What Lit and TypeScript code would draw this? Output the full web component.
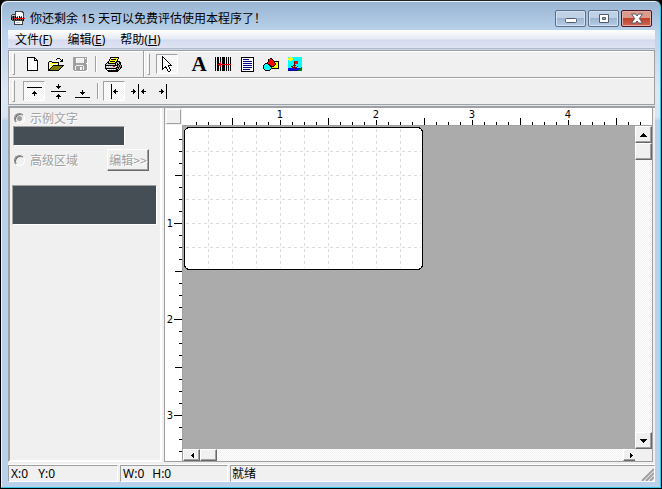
import { LitElement, html, svg, css } from "lit";
import { customElement } from "lit/decorators.js";

const palette: Record<string, string> = {
  k: "#000000", w: "#ffffff", y: "#ffff00", o: "#808000", g: "#a0a0a0", d: "#606060",
  r: "#ff0000", m: "#800000", c: "#00ffff", b: "#000080", u: "#0000ff", l: "#c8c8c8",
  n: "#008000", t: "#5a6b80", s: "#404040",
};

const bitmaps: Record<string, string[]> = {
  app: [
    "    ssssssss  ",
    "    swwwwwlss ",
    "    swwwwwwws ",
    " sssswwwwwwws ",
    "sllldwwwwwwws ",
    "sdkdkwdwkwdwd ",
    "kdkdkdkwkdkwk ",
    "kdkrrrrrrrrrrr",
    "kdkdkdkdkdkdk ",
    " sssssssssssk ",
    "   swwwwwwws  ",
    "   swllllwws  ",
    "   swwwwwwws  ",
    "   sssssssss  ",
  ],
  new: [
    "kkkkkkkk   ",
    "kwwwwwwkk  ",
    "kwwwwwwkwk ",
    "kwwwwwwkkkk",
    ...Array(9).fill("kwwwwwwwwwk"),
    "kkkkkkkkkkk",
  ],
  open: [
    "         kkk    ",
    "        k   k k ",
    "             kk ",
    " kkk        kkk ",
    "kywykkkkkkk     ",
    "kwywywywywk     ",
    "kywywywywyk     ",
    "kwywykkkkkkkkkkk",
    "kywykoooooooook ",
    "kwykoooooooook  ",
    "kykoooooooook   ",
    "kkoooooooook    ",
    "kkkkkkkkkkk     ",
  ],
  save: [
    "gggggggggggggg ",
    "gggw      wgwgw",
    "gggw      wgggw",
    "gggw      wgggw",
    "gggw      wgggw",
    "gggw      wgggw",
    "gggggggggggggww",
    "ggggggggggggggw",
    "ggg       ggggw",
    "gg ggggggg gggw",
    "gg ggggw g gggw",
    "gg ggggw g gggw",
    "gg ggggw g gggw",
    " ggggggggggggww",
    "  wwwwwwwwwwww ",
  ],
  print: [
    "     kkkkkkkkk   ",
    "     kwwyyyywk   ",
    "    kykkkkkyk    ",
    "    kyyyyyyyk    ",
    "   kykkkkkykkkk  ",
    "  kkyyyyyykkglkk ",
    " klkkkkkkkklklkk ",
    "klllllllllklkkgk ",
    "kkkkkkkkkkkkkgkgk",
    "klwlwlwlrrlwkgkgk",
    "kllllllllllkkkgkk",
    "kkkkkkkkkkkkgkgk ",
    " kwwlwlwlwlkkgk  ",
    "  kkkkkkkkkkkk   ",
    "   kkkkkkkkkk    ",
  ],
  pointer: [
    "k         ",
    "kk        ",
    "kwk       ",
    "kwwk      ",
    "kwwwk     ",
    "kwwwwk    ",
    "kwwwwwk   ",
    "kwwwwwwk  ",
    "kwwwwwwwk ",
    "kwwwwwkkkk",
    "kwwkwwk   ",
    "kwkkkwwk  ",
    "kk  kwwk  ",
    "k    kwwk ",
    "     kwwk ",
    "      kk  ",
  ],
  barcode: [
    ...Array(5).fill("k kk k kkk k k k"),
    "k kk r kkk k k k",
    "k kkrr kkk k k k",
    "k krrrrrrrrrrrrr",
    "k kkrr kkk k k k",
    "k kk r kkk k k k",
    ...Array(4).fill("k kk k kkk k k k"),
  ],
  text: [
    "kkkkkkkkkkkkk",
    "kwwwwwwwwwwwk",
    "kwbbbbbbwwwwk",
    "kwwwwwwwwwwwk",
    "kwbbbbbbbbbwk",
    "kwwwwwwwwwwwk",
    "kwbbbbbbbbbwk",
    "kwwwwwwwwwwwk",
    "kwbbbbbbbbbwk",
    "kwwwwwwwwwwwk",
    "kwbbbbbbbbbwk",
    "kwwwwwwwwwwwk",
    "kwbbbbbbbwwwk",
    "kwwwwwwwwwwwk",
    "kkkkkkkkkkkkk",
  ],
  shapes: [
    "       kk       ",
    "     krrrk      ",
    "     krrrrk     ",
    "     krrrrrkkkkk",
    "    krrrrrrkyyyk",
    "  kkkrrrrrrrkyyk",
    " kccckkrrrrrkyyk",
    "kccccckkrrrkyyyk",
    "kcccccckkkkyyyyk",
    "kccccccckyyyyyyk",
    "kccccccckkkkkkkk",
    " kccccck        ",
    "  kkkkk         ",
  ],
  picture: [
    "cyyycccccccccc",
    "yyyyyccccccccc",
    "yyyyyccccccccc",
    "cyyycccccccccc",
    "ccccccmrrrcccc",
    "ccccccmrrrcccc",
    "ccccccmrrrcccc",
    "ccccccmccccccc",
    "cccccmmmcccccc",
    "cccmmcmccmcccc",
    "ccccmmmmmccccn",
    "uuuuummmuuuunn",
    "uuuuuuuuuuunnn",
    "bububububunnnn",
  ],
  top: [
    "kkkkkkkkkkkkkkk", "", "", "", "       k", "      kkk", "     kkkkk", "       k", "       k",
  ],
  middle: [
    "       k", "       k", "     kkkkk", "      kkk", "       k", "", "",
    "kkkkkkkkkkkkkkk", "", "", "       k", "      kkk", "     kkkkk", "       k", "       k",
  ],
  bottom: [
    "", "", "", "", "", "       k", "       k", "     kkkkk", "      kkk", "       k", "", "", "kkkkkkkkkkkkkkk",
  ],
  left: [
    "k", "k", "k", "k", "k", "k   k", "k  kk", "k kkkkk", "k  kk", "k   k", "k", "k", "k", "k", "k",
  ],
  center: [
    ...Array(5).fill("       k"), "  k    k    k", "  kk   k   kk", "kkkkk  k  kkkkk",
    "  kk   k   kk", "  k    k    k", ...Array(5).fill("       k"),
  ],
  right: [
    ...Array(5).fill("       k"), "  k    k", "  kk   k", "kkkkk  k", "  kk   k", "  k    k", ...Array(5).fill("       k"),
  ],
  up: ["   k   ", "  kkk  ", " kkkkk ", "kkkkkkk"],
  down: ["kkkkkkk", " kkkkk ", "  kkk  ", "   k   "],
  back: ["   k", "  kk", " kkk", "  kk", "   k"],
  forward: ["k", "kk", "kkk", "kk", "k"],
};

function icon(name: string) {
  const rows = bitmaps[name];
  const w = Math.max(...rows.map((r) => r.length));
  const h = rows.length;
  const runs: unknown[] = [];
  rows.forEach((row, y) => {
    let x = 0;
    while (x < row.length) {
      const ch = row[x];
      let end = x + 1;
      while (end < row.length && row[end] === ch) end++;
      if (ch !== " ") runs.push(svg`<rect x=${x} y=${y} width=${end - x} height="1" fill=${palette[ch]}></rect>`);
      x = end;
    }
  });
  return html`<svg class="icon" width=${w} height=${h} viewBox="0 0 ${w} ${h}" aria-hidden="true">${runs}</svg>`;
}

const STEP = 12;
const TICKS = Array.from({ length: 200 }, (_, i) => i + 1);
const tickLength = (i: number, inch: number) => (i % 8 === 0 ? inch : i % 4 === 0 ? 7 : 3);

@customElement("app-root")
export class AppRoot extends LitElement {
  static styles = css`
    :host { display: block; font: 12px/16px "Noto Sans", "Noto Sans CJK SC", sans-serif; color: #000; }
    * { box-sizing: border-box; }
    button { font: inherit; color: inherit; border: 0; background: none; padding: 0; margin: 0; }
    .icon { display: block; shape-rendering: crispEdges; flex: none; }
    .window {
      height: 100vh; display: flex; flex-direction: column; overflow: hidden;
      border: 1px solid #000; border-top-color: #222; border-radius: 7px 7px 0 0;
      padding: 0 6px 6px 7px;
      background: linear-gradient(#98b4d2, #b9d1ea 30px, #dce8f5 92px, #d6e4f4 116px, #b9d1ea 120px);
      box-shadow: inset -1px -1px #35c5e6, inset 1px 1px #e8f1fa;
    }
    .backdrop { background: #000; }
    .title { height: 29px; flex: none; display: flex; align-items: center; gap: 5px; padding: 5px 3px 0 3px; }
    .title h1 { flex: 1; font: inherit; line-height: 18px; padding-top: 2px; margin: 0; white-space: nowrap; }
    .controls { display: flex; gap: 2px; }
    .control {
      width: 31px; height: 17px; display: grid; place-items: center; border: 1px solid #5c6f88; border-radius: 2px;
      background: linear-gradient(#bfd1e6 45%, #9cb6d2 50%, #b7cde5); box-shadow: inset 0 0 0 1px #d2e0ef;
    }
    .close { border-color: #4a1620; background: linear-gradient(#dc9a8c 45%, #bd402a 50%, #cf6a52); box-shadow: inset 0 0 0 1px #e4aca2; }
    .menu {
      height: 19px; flex: none; display: flex; gap: 15px; padding: 2px 7px 0; border-bottom: 1px solid #b4bac8;
      background: linear-gradient(#fff, #e6eaf5 50%, #d5dbee 55%, #dfe4f4);
    }
    .menu button { white-space: nowrap; }
    .tools { background: #f0f0f0; border: 1px solid #a0a0a0; margin-top: 1px; box-shadow: inset 1px 1px #fff; flex: none; }
    .bar { display: flex; height: 27px; border-bottom: 1px solid #a0a0a0; box-shadow: inset 0 1px #fff; }
    .bar:last-child { height: 26px; border-bottom: 0; }
    .band { display: flex; align-items: center; padding: 0 0 0 3px; }
    .band + .band { border-left: 1px solid #a0a0a0; box-shadow: inset 1px 1px #fff; flex: 1; }
    .grip { width: 3px; height: 22px; border: 1px solid; border-color: #fff #a0a0a0 #a0a0a0 #fff; margin-right: 5px; }
    .tool { width: 24px; height: 22px; display: grid; place-items: center; }
    .tool.on {
      width: 22px; height: 20px; border: 1px solid; border-color: #a0a0a0 #fff #fff #a0a0a0;
      background: repeating-conic-gradient(#fff 0 25%, #f0f0f0 0 50%) 0 0 / 2px 2px;
    }
    .letter { font: bold 21px/20px "Liberation Serif", serif; }
    .rule { width: 2px; height: 16px; margin: 0 4px 0 3px; border-left: 1px solid #a0a0a0; border-right: 1px solid #fff; }
    .after { margin-right: 9px; }
    .indent { margin-left: 1px; }
    .first { margin-left: 3px; }
    .work { flex: 1; min-height: 0; display: flex; background: #f0f0f0; border-top: 2px solid #a0a0a0; border-bottom: 2px solid #f0f0f0; margin-top: 1px; }
    .side {
      width: 154px; flex: none; border-left: 2px solid #a0a0a0; border-right: 2px solid #fff; border-bottom: 2px solid #fff;
      color: #a0a0a0; text-shadow: 1px 1px #fff; padding: 2px 0 0 2px; font-family: "Noto Sans CJK SC", sans-serif;
    }
    .line { display: flex; align-items: center; justify-content: space-between; padding: 0 11px 0 2px; height: 16px; }
    .line label { display: flex; align-items: center; gap: 5px; }
    .radio {
      appearance: none; width: 11px; height: 11px; border-radius: 50%; margin: 0; border: 1px solid;
      border-color: #888 #fff #fff #888; box-shadow: inset 1px 1px #707070; background: #f0f0f0;
    }
    .radio:checked { background: radial-gradient(circle, #a0a0a0 2px, #f0f0f0 3px); }
    .field, .area { display: block; background: #444e54; border: 1px solid; border-color: #a0a0a0 #fff #fff #a0a0a0; border-radius: 0; resize: none; padding: 0; }
    .field { width: 112px; height: 20px; margin: 0 0 3px 1px; }
    .area { width: 145px; height: 40px; margin: 14px 0 0; }
    .second { height: 22px; }
    .edit { width: 42px; height: 22px; white-space: nowrap; overflow: hidden; text-shadow: inherit; }
    .edit, .raised { background: #f0f0f0; border: 1px solid; border-color: #fff #696969 #696969 #fff; box-shadow: inset -1px -1px #a0a0a0; }
    .edit:disabled { color: #a0a0a0; }
    .editor {
      flex: 1; min-width: 0; margin: 0 2px 0 2px; display: grid; grid-template: 17px minmax(0, 1fr) / 17px minmax(0, 1fr);
      border: 1px solid; border-color: transparent #a0a0a0 #a0a0a0; border-top: 0; background: #fff;
    }
    .corner { background: #f0f0f0; padding: 1px; }
    .knob { height: 15px; border: 1px solid; border-color: #fff #a0a0a0 #a0a0a0 #fff; }
    .ruler { display: block; width: 100%; height: 100%; overflow: hidden; shape-rendering: crispEdges; }
    .number { font-family: "DejaVu Sans Condensed", "DejaVu Sans", sans-serif; font-size: 11px; }
    .stage { display: grid; grid-template: minmax(0, 1fr) 12px / minmax(0, 1fr) 17px; border: 1px solid #a0a0a0; border-width: 1px 0 0 1px; }
    .canvas { background: #ababab; overflow: hidden; padding: 1px; }
    .paper { display: block; shape-rendering: crispEdges; }
    .scroll { display: flex; background: repeating-conic-gradient(#fff 0 25%, #f0f0f0 0 50%) 0 0 / 2px 2px; }
    .scroll.v { flex-direction: column; }
    .scroll .raised { width: 17px; height: 100%; display: grid; place-items: center; }
    .scroll.v .raised { width: 100%; height: 17px; }
    .track { flex: 1; }
    .stagecorner { background: #f0f0f0; }
    .lap { margin-right: -5px; }
    .status { height: 18px; flex: none; display: flex; gap: 2px; background: #f0f0f0; border-top: 1px solid #fff; }
    .cell { display: flex; gap: 10px; width: 110px; padding: 0 2px; border: 1px solid; border-color: #a0a0a0 #fff #fff #a0a0a0; line-height: 15px; white-space: nowrap; }
    .cell.extent { width: 108px; gap: 8px; }
    .cell.ready { flex: 1; justify-content: space-between; padding: 0 0 0 1px; }
  `;

  private tool(name: string, label: string, cls = "") {
    return html`<button class="tool ${cls}" aria-label=${label}>${icon(name)}</button>`;
  }

  private horizontalRuler() {
    return html`<svg class="ruler" aria-hidden="true">
      ${TICKS.map((i) => {
        const len = tickLength(i, 5);
        return svg`<rect x=${2 + i * STEP} y=${17 - len} width="1" height=${len}></rect>`;
      })}
      ${[1, 2, 3, 4].map((n) => svg`<text class="number" x=${2 + n * 8 * STEP} y="10" text-anchor="middle">${n}</text>`)}
    </svg>`;
  }

  private verticalRuler() {
    return html`<svg class="ruler" aria-hidden="true">
      ${TICKS.map((i) => {
        const len = tickLength(i, 8);
        return svg`<rect x=${17 - len} y=${2 + i * STEP} width=${len} height="1"></rect>`;
      })}
      ${[1, 2, 3].map((n) => svg`<text class="number" x="5" y=${6 + n * 8 * STEP} text-anchor="middle">${n}</text>`)}
    </svg>`;
  }

  private paper() {
    const cols = Array.from({ length: 9 }, (_, i) => (i + 1) * 24);
    const rows = Array.from({ length: 5 }, (_, i) => (i + 1) * 24);
    return html`<svg class="paper" width="239" height="143" role="img" aria-label="标签">
      <rect x="0.5" y="0.5" width="238" height="142" rx="5" fill="#fff" stroke="#000"></rect>
      <g stroke="#dcdcdc" stroke-dasharray="3 3">
        ${cols.map((x) => svg`<path d="M${x + 0.5} 2V141"></path>`)}
        ${rows.map((y) => svg`<path d="M2 ${y + 0.5}H237"></path>`)}
      </g>
    </svg>`;
  }

  render() {
    return html`<div class="backdrop"><div class="window">
      <header class="title">
        ${icon("app")}
        <h1>你还剩余 15 天可以免费评估使用本程序了！</h1>
        <div class="controls">
          <button class="control" aria-label="最小化">
            <svg width="12" height="11"><rect x="0.5" y="5.5" width="11" height="4" rx="1" fill="#fff" stroke="#535b6a"></rect></svg>
          </button>
          <button class="control" aria-label="最大化">
            <svg width="12" height="11"><path fill-rule="evenodd" d="M1.5 1.500h9v8h-9zM4.500 4.500h3v2h-3z" fill="#fff" stroke="#535b6a"></path></svg>
          </button>
          <button class="control close" aria-label="关闭">
            <svg width="12" height="11"><path d="M.5 1h4L6 3l1.500-2h4L8.300 5.500l3.200 4.500h-4L6 8l-1.500 2h-4l3.200-4.500z" fill="#fff" stroke="#535b6a"></path></svg>
          </button>
        </div>
      </header>
      <nav class="menu">
        <button>文件(<u>F</u>)</button><button>编辑(<u>E</u>)</button><button>帮助(<u>H</u>)</button>
      </nav>
      <div class="tools">
        <div class="bar">
          <div class="band">
            <span class="grip"></span>
            ${this.tool("new", "新建")}${this.tool("open", "打开")}${this.tool("save", "保存")}
            <span class="rule"></span>${this.tool("print", "打印")}<span class="after"></span><span class="after"></span>
          </div>
          <div class="band">
            <span class="grip"></span>
            ${this.tool("pointer", "选择", "on after indent")}
            <button class="tool" aria-label="文字"><span class="letter">A</span></button>
            ${this.tool("barcode", "条形码")}${this.tool("text", "文本")}${this.tool("shapes", "形状")}${this.tool("picture", "图片")}
          </div>
        </div>
        <div class="bar">
          <div class="band">
            <span class="grip"></span>
            ${this.tool("top", "顶部对齐", "on first")}${this.tool("middle", "垂直居中", "indent")}${this.tool("bottom", "底部对齐")}
            <span class="rule"></span>${this.tool("left", "左对齐", "on")}${this.tool("center", "水平居中", "indent")}${this.tool("right", "右对齐", "indent")}
          </div>
        </div>
      </div>
      <main class="work">
        <aside class="side">
          <div class="line"><label><input class="radio" type="radio" name="kind" checked disabled />示例文字</label></div>
          <input class="field" type="text" aria-label="示例文字" disabled />
          <div class="line second">
            <label><input class="radio" type="radio" name="kind" disabled />高级区域</label>
            <button class="edit" disabled>编辑&gt;&gt;</button>
          </div>
          <textarea class="area" aria-label="高级区域" disabled></textarea>
        </aside>
        <section class="editor">
          <div class="corner"><div class="knob"></div></div>
          ${this.horizontalRuler()}
          ${this.verticalRuler()}
          <div class="stage">
            <div class="canvas">${this.paper()}</div>
            <div class="scroll v">
              <button class="raised" aria-label="向上">${icon("up")}</button>
              <button class="raised" aria-label="垂直滑块"></button>
              <span class="track"></span>
              <button class="raised" aria-label="向下">${icon("down")}</button>
            </div>
            <div class="scroll lap">
              <button class="raised" aria-label="向左">${icon("back")}</button>
              <button class="raised" aria-label="水平滑块"></button>
              <span class="track"></span>
              <button class="raised" aria-label="向右">${icon("forward")}</button>
            </div>
            <div class="stagecorner"></div>
          </div>
        </section>
      </main>
      <footer class="status">
        <div class="cell"><span>X:0</span><span>Y:0</span></div>
        <div class="cell extent"><span>W:0</span><span>H:0</span></div>
        <div class="cell ready"><span>就绪</span>
          <svg width="13" height="15" aria-hidden="true"><path d="M1 15L13 3M5 15L13 7M9 15L13 11" stroke="#a0a0a0" stroke-width="2"></path></svg>
        </div>
      </footer>
    </div></div>`;
  }
}
